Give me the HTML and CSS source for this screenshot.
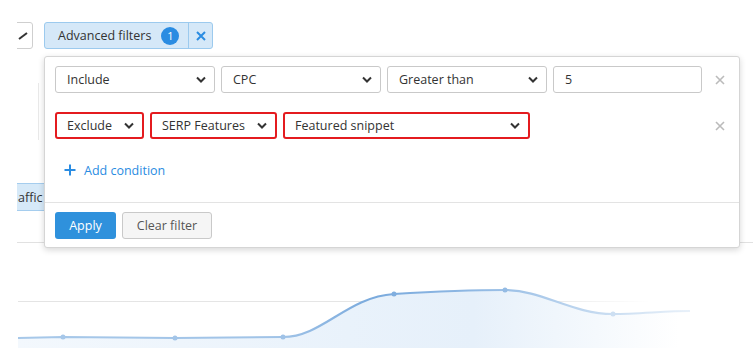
FILE: index.html
```html
<!DOCTYPE html>
<html>
<head>
<meta charset="utf-8">
<link rel="stylesheet" href="styles.css">
</head>
<body>
<div class="page">
  <div class="toolbar">
    <div class="btn-partial">
      <svg class="tick" width="10" height="8" viewBox="0 0 10 8"><path d="M1 7 L9 1" stroke="#333" stroke-width="2" fill="none"/></svg>
    </div>
    <div class="adv-btn">
      <span class="adv-label">Advanced filters</span>
      <span class="badge">1</span>
      <span class="adv-close">
        <svg width="10" height="10" viewBox="0 0 10 10"><path d="M1 1 L9 9 M9 1 L1 9" stroke="#2a8ce2" stroke-width="2" fill="none"/></svg>
      </span>
    </div>
  </div>
  <div class="ghost-line"></div>
  <div class="tab">affic</div>
  <div class="chart">
    <svg class="chart-svg" width="736" height="105" viewBox="0 0 736 105">
      <defs>
        <linearGradient id="lineGrad" x1="0" y1="0" x2="736" y2="0" gradientUnits="userSpaceOnUse">
          <stop offset="0" stop-color="#a7c8e9"/>
          <stop offset="0.36" stop-color="#a0c3e7"/>
          <stop offset="0.48" stop-color="#7aaadd"/>
          <stop offset="0.62" stop-color="#8fb8e3"/>
          <stop offset="0.8" stop-color="#c8dcf1"/>
          <stop offset="0.95" stop-color="#f2f7fc"/>
        </linearGradient>
        <linearGradient id="areaGrad" x1="0" y1="0" x2="736" y2="0" gradientUnits="userSpaceOnUse">
          <stop offset="0" stop-color="#f3f8fd"/>
          <stop offset="0.45" stop-color="#e9f2fb"/>
          <stop offset="0.62" stop-color="#e6f0fa"/>
          <stop offset="0.9" stop-color="#ffffff"/>
        </linearGradient>
        <linearGradient id="gridGrad" x1="0" y1="0" x2="736" y2="0" gradientUnits="userSpaceOnUse">
          <stop offset="0" stop-color="#e4e4e4"/>
          <stop offset="0.7" stop-color="#e6e6e6"/>
          <stop offset="0.86" stop-color="#ffffff"/>
        </linearGradient>
      </defs>
      <line x1="1" y1="58.5" x2="640" y2="58.5" stroke="url(#gridGrad)" stroke-width="1"/>
      <path d="M1 95 L46 94 L158 95 L266 94 C305 94 330 54 377 51 C410 49 450 47 488 47 C525 47 555 71 596 71 C620 71 650 68 673 68 L673 105 L1 105 Z" fill="url(#areaGrad)"/>
      <path d="M1 95 L46 94 L158 95 L266 94 C305 94 330 54 377 51 C410 49 450 47 488 47 C525 47 555 71 596 71 C620 71 650 68 673 68" fill="none" stroke="url(#lineGrad)" stroke-width="2.2"/>
      <circle cx="46" cy="94" r="2.5" fill="#a6c7e9"/>
      <circle cx="158" cy="95" r="2.5" fill="#a3c5e8"/>
      <circle cx="266" cy="94" r="2.5" fill="#9fc2e7"/>
      <circle cx="377" cy="51" r="2.5" fill="#80aedf"/>
      <circle cx="488" cy="47" r="2.5" fill="#94bbe4"/>
      <circle cx="596" cy="71" r="2.5" fill="#cddff2"/>
    </svg>
  </div>
</div>

<div class="popup">
  <div class="pop-body">
    <div class="row">
      <div class="fields">
        <div class="field w-160"><span>Include</span><svg class="chev" width="10" height="7" viewBox="0 0 10 7"><path d="M1 1.5 L5 5.5 L9 1.5" stroke="#333" stroke-width="2" fill="none"/></svg></div>
        <div class="field w-160"><span>CPC</span><svg class="chev" width="10" height="7" viewBox="0 0 10 7"><path d="M1 1.5 L5 5.5 L9 1.5" stroke="#333" stroke-width="2" fill="none"/></svg></div>
        <div class="field w-160"><span>Greater than</span><svg class="chev" width="10" height="7" viewBox="0 0 10 7"><path d="M1 1.5 L5 5.5 L9 1.5" stroke="#333" stroke-width="2" fill="none"/></svg></div>
        <div class="field input w-149"><span>5</span></div>
      </div>
      <div class="row-close"><svg width="10" height="10" viewBox="0 0 10 10"><path d="M1 1 L9 9 M9 1 L1 9" stroke="#bbbbbb" stroke-width="1.6" fill="none"/></svg></div>
    </div>
    <div class="row">
      <div class="fields">
        <div class="field hl w-89"><span>Exclude</span><svg class="chev" width="10" height="7" viewBox="0 0 10 7"><path d="M1 1.5 L5 5.5 L9 1.5" stroke="#333" stroke-width="2" fill="none"/></svg></div>
        <div class="field hl w-127"><span>SERP Features</span><svg class="chev" width="10" height="7" viewBox="0 0 10 7"><path d="M1 1.5 L5 5.5 L9 1.5" stroke="#333" stroke-width="2" fill="none"/></svg></div>
        <div class="field hl w-247"><span>Featured snippet</span><svg class="chev" width="10" height="7" viewBox="0 0 10 7"><path d="M1 1.5 L5 5.5 L9 1.5" stroke="#333" stroke-width="2" fill="none"/></svg></div>
      </div>
      <div class="row-close"><svg width="10" height="10" viewBox="0 0 10 10"><path d="M1 1 L9 9 M9 1 L1 9" stroke="#bbbbbb" stroke-width="1.6" fill="none"/></svg></div>
    </div>
    <div class="add">
      <svg width="12" height="12" viewBox="0 0 12 12"><path d="M6 0.5 V11.5 M0.5 6 H11.5" stroke="#2a8ce2" stroke-width="2" fill="none"/></svg>
      <span>Add condition</span>
    </div>
  </div>
  <div class="pop-foot">
    <div class="btn btn-apply">Apply</div>
    <div class="btn btn-clear">Clear filter</div>
  </div>
</div>
</body>
</html>
```

FILE: styles.css
```css
* { box-sizing: border-box; }
html, body { margin: 0; padding: 0; background: #fff; }
body {
  width: 753px;
  height: 348px;
  overflow: hidden;
  position: relative;
  font-family: "Open Sans", "Noto Sans", sans-serif;
  font-size: 12.5px;
  color: #333;
}
.page {
  margin-left: 17px;
  width: 736px;
  height: 348px;
  overflow: hidden;
}
.toolbar {
  display: flex;
  align-items: center;
  gap: 11px;
  padding-top: 22px;
  margin-left: -27px;
}
.btn-partial {
  width: 43px;
  height: 27px;
  border: 1px solid #cfcfcf;
  border-radius: 3px;
  display: flex;
  align-items: center;
  padding-left: 27px;
}
.tick { display: block; }
.adv-btn {
  display: flex;
  align-items: stretch;
  height: 27px;
  border: 1px solid #9ccaee;
  border-radius: 3px;
  background: #d5e8f8;
}
.adv-label {
  display: flex;
  align-items: center;
  padding-left: 13px;
  color: #333;
}
.badge {
  align-self: center;
  margin-left: 10px;
  width: 18px;
  height: 18px;
  border-radius: 50%;
  background: #2a8ce2;
  color: #fff;
  font-size: 11px;
  display: flex;
  align-items: center;
  justify-content: center;
}
.adv-close {
  margin-left: 9px;
  width: 24px;
  border-left: 1px solid #9ccaee;
  display: flex;
  align-items: center;
  justify-content: center;
}
.ghost-line {
  margin: 34px 0 0 21px;
  height: 57px;
  border-left: 1px solid #e9e9e9;
}
.tab {
  margin-top: 43px;
  width: 100px;
  height: 28px;
  padding-left: 1px;
  display: flex;
  align-items: center;
  background: #d6e9f8;
  border: 1px solid #a5cdee;
  border-left: none;
}
.chart {
  margin-top: 31px;
  border-top: 1px solid #e1e1e1;
}
.chart-svg { display: block; }

.popup {
  position: absolute;
  left: 44px;
  top: 56px;
  width: 696px;
  height: 192px;
  background: #fff;
  border: 1px solid #d5d5d5;
  border-radius: 3px;
  box-shadow: 0 2px 6px rgba(0, 0, 0, 0.16);
}
.pop-body { padding: 9px 0 22px 10px; }
.row {
  display: flex;
  align-items: center;
  height: 27px;
}
.row + .row { margin-top: 19px; }
.fields {
  display: flex;
  gap: 6px;
  width: 647px;
  height: 27px;
}
.field {
  display: flex;
  align-items: center;
  justify-content: space-between;
  height: 27px;
  padding: 0 8px 0 11px;
  border: 1px solid #c9c9c9;
  border-radius: 3px;
  background: #fff;
  white-space: nowrap;
}
.field.hl {
  border: 2px solid #e41b1f;
  padding: 0 8px 0 10px;
}
.chev { display: block; flex: none; }
.w-160 { width: 160px; }
.w-149 { width: 149px; }
.w-89 { width: 89px; }
.w-127 { width: 127px; }
.w-247 { width: 247px; }
.row-close {
  width: 36px;
  display: flex;
  justify-content: center;
}
.add {
  margin-top: 21px;
  height: 20px;
  display: flex;
  align-items: center;
  gap: 8px;
  padding-left: 9px;
  color: #2a8ce2;
}
.pop-foot {
  border-top: 1px solid #e3e3e3;
  padding: 9px 10px 0;
  display: flex;
  gap: 6px;
}
.btn {
  height: 27px;
  border-radius: 3px;
  display: flex;
  align-items: center;
  justify-content: center;
}
.btn-apply {
  width: 61px;
  background: #2f91dc;
  color: #fff;
}
.btn-clear {
  width: 90px;
  background: #f5f5f5;
  border: 1px solid #c9c9c9;
  color: #555;
}
```
